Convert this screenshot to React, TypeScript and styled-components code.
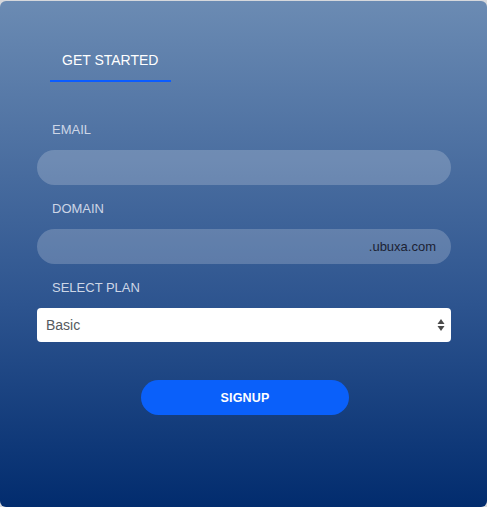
import React from "react";
import styled, { createGlobalStyle } from "styled-components";

const Global = createGlobalStyle`
  html, body { margin: 0; padding: 0; background: #d6d8dc; }
  body { font-family: "Liberation Sans", Arial, sans-serif; }
  * { box-sizing: border-box; }
`;

const Panel = styled.div`
  margin-top: 1px;
  height: 506px;
  border-radius: 6px;
  background: linear-gradient(180deg, #6b8bb3 0%, #2d548f 60%, #022c6e 100%);
  padding: 41px 36px 0 37px;
  display: flex;
  flex-direction: column;
`;

const Tabs = styled.div`
  display: flex;
  padding-left: 13px;
`;

const Tab = styled.div<{ $active?: boolean }>`
  padding: 10px 12px 12px;
  width: 121px;
  font-size: 14px;
  line-height: 16px;
  color: #ffffff;
  border-bottom: 2px solid ${(p) => (p.$active ? "#0b5cff" : "transparent")};
`;

const Form = styled.form`
  margin-top: 40px;
  display: flex;
  flex-direction: column;
  gap: 16px;
`;

const Field = styled.div`
  display: flex;
  flex-direction: column;
  gap: 13px;
`;

const Label = styled.label`
  padding-left: 15px;
  font-size: 13px;
  line-height: 15px;
  color: #cdd6e6;
`;

const PillBox = styled.div`
  height: 35px;
  border-radius: 18px;
  background: rgba(255, 255, 255, 0.2);
  display: flex;
  align-items: center;
  padding: 0 15px;
`;

const PillInput = styled.input`
  flex: 1;
  min-width: 0;
  border: 0;
  outline: 0;
  background: transparent;
  font-family: inherit;
  font-size: 13px;
  color: #1a2233;
`;

const Suffix = styled.span`
  font-size: 13px;
  color: #1c2233;
`;

const SelectBox = styled.div`
  height: 34px;
  border-radius: 4px;
  background: #ffffff;
  display: flex;
  align-items: center;
  justify-content: space-between;
  padding: 0 6px 0 9px;
  font-size: 14px;
  color: #555a60;
`;

const Arrows = styled.svg`
  width: 8px;
  height: 14px;
`;

const ButtonRow = styled.div`
  margin-top: 38px;
  display: flex;
  justify-content: center;
  padding-left: 2px;
`;

const Signup = styled.button`
  width: 208px;
  height: 35px;
  border: 0;
  border-radius: 18px;
  background: #0a60fa;
  color: #ffffff;
  font-family: inherit;
  font-weight: bold;
  font-size: 12.5px;
  letter-spacing: 0.2px;
`;

export default function App() {
  return (
    <>
      <Global />
      <Panel>
        <Tabs>
          <Tab $active>GET STARTED</Tab>
        </Tabs>
        <Form onSubmit={(e) => e.preventDefault()}>
          <Field>
            <Label>EMAIL</Label>
            <PillBox>
              <PillInput type="email" />
            </PillBox>
          </Field>
          <Field>
            <Label>DOMAIN</Label>
            <PillBox>
              <PillInput type="text" />
              <Suffix>.ubuxa.com</Suffix>
            </PillBox>
          </Field>
          <Field>
            <Label>SELECT PLAN</Label>
            <SelectBox>
              <span>Basic</span>
              <Arrows viewBox="0 0 8 14">
                <path d="M4 1 L7.5 6 L0.5 6 Z" fill="#4a4a4a" />
                <path d="M4 13 L7.5 8 L0.5 8 Z" fill="#4a4a4a" />
              </Arrows>
            </SelectBox>
          </Field>
        </Form>
        <ButtonRow>
          <Signup type="button">SIGNUP</Signup>
        </ButtonRow>
      </Panel>
    </>
  );
}
